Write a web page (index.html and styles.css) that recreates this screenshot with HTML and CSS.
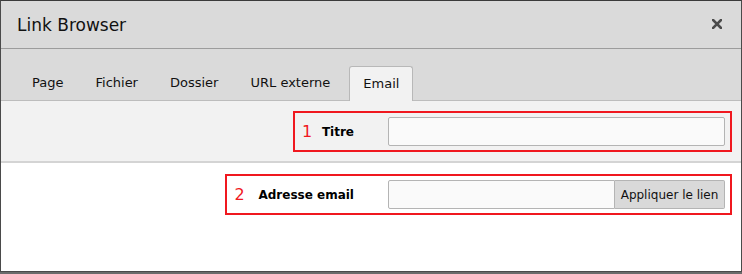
FILE: index.html
```html
<!DOCTYPE html>
<html lang="fr">
<head>
    <meta charset="UTF-8">
    <meta name="viewport" content="width=device-width, initial-scale=1.0">
    <title>Link Browser</title>
    <link rel="stylesheet" href="styles.css">
</head>
<body>
    <div class="dialog">
        <header class="dialog-header">
            <h1 class="dialog-title">Link Browser</h1>
            <button class="close" type="button" aria-label="Fermer">
                <svg width="10" height="10" viewBox="0 0 10 10"><path d="M1 1L9 9M9 1L1 9" stroke="#4a4a4a" stroke-width="2.6" stroke-linecap="square"/></svg>
            </button>
        </header>

        <nav class="tabs">
            <div class="tab">Page</div>
            <div class="tab">Fichier</div>
            <div class="tab">Dossier</div>
            <div class="tab">URL externe</div>
            <div class="tab active">Email</div>
        </nav>

        <div class="section section-grey">
            <div class="mark">
                <span class="num">1</span>
                <label class="label" for="titre">Titre</label>
                <div class="field">
                    <input class="input" id="titre" type="text">
                </div>
            </div>
        </div>

        <div class="section">
            <div class="mark mark-wide">
                <span class="num">2</span>
                <label class="label" for="email">Adresse email</label>
                <div class="field">
                    <input class="input" id="email" type="text">
                    <button class="apply" type="button">Appliquer le lien</button>
                </div>
            </div>
        </div>
    </div>
</body>
</html>
```

FILE: styles.css
```css
body {
    margin: 0;
    padding: 0;
    background: #6b6b6b;
    font-family: "DejaVu Sans", Verdana, sans-serif;
    color: #000;
    height: 274px;
    overflow: hidden;
}
.dialog {
    border: 1px solid #4a4a4a;
    border-top-color: #3a3a3a;
    background: #ffffff;
    box-sizing: border-box;
    height: 272px;
}
.dialog-header {
    height: 47px;
    background: #dadada;
    border-bottom: 1px solid #9c9c9c;
    display: flex;
    align-items: center;
    justify-content: space-between;
    padding: 0 19px 0 16px;
}
.dialog-title {
    margin: 0;
    font-size: 17px;
    font-weight: normal;
    padding-top: 1px;
    color: #111;
}
.close {
    border: 0;
    background: none;
    padding: 0;
    display: flex;
    margin-top: -2px;
}
.tabs {
    background: #dadada;
    border-bottom: 1px solid #bdbdbd;
    display: flex;
    align-items: flex-end;
    padding-left: 16px;
    box-sizing: border-box;
    height: 52px;
}
.tab {
    height: 34px;
    line-height: 34px;
    padding: 0 15px;
    margin-right: 2px;
    font-size: 13px;
    color: #111;
    box-sizing: border-box;
}
.tab.active {
    background: #f2f2f2;
    border: 1px solid #b8b8b8;
    border-bottom: 0;
    border-radius: 3px 3px 0 0;
    margin-bottom: -1px;
    height: 35px;
    padding: 0 13px;
    margin-left: 2px;
}
.section {
    display: flex;
    justify-content: flex-end;
    padding: 11px 9px 9px 0;
}
.section-grey {
    background: #f2f2f2;
    border-bottom: 2px solid #d4d4d4;
    padding: 10px 9px 9px 0;
}
.mark {
    display: flex;
    align-items: center;
    border: 2px solid #f0181f;
    padding: 4px 5px 4px 7px;
}
.mark-wide {
    padding-left: 7px;
}
.mark-wide .num {
    width: 24px;
}
.num {
    color: #f0181f;
    font-size: 16px;
    width: 20px;
}
.label {
    font-weight: bold;
    font-size: 12px;
    margin-right: 34px;
}
.field {
    display: flex;
    width: 337px;
}
.input {
    flex: 1;
    height: 29px;
    box-sizing: border-box;
    border: 1px solid #b4b4b4;
    border-radius: 2px;
    background: #fafafa;
    margin: 0;
    min-width: 0;
}
.field .input:not(:last-child) {
    border-radius: 2px 0 0 2px;
}
.apply {
    height: 29px;
    width: 110px;
    box-sizing: border-box;
    border: 1px solid #b4b4b4;
    border-left: 0;
    border-radius: 0 2px 2px 0;
    background: #d9d9d9;
    font-family: "DejaVu Sans", Verdana, sans-serif;
    font-size: 12px;
    padding: 0;
    color: #111;
}
```
